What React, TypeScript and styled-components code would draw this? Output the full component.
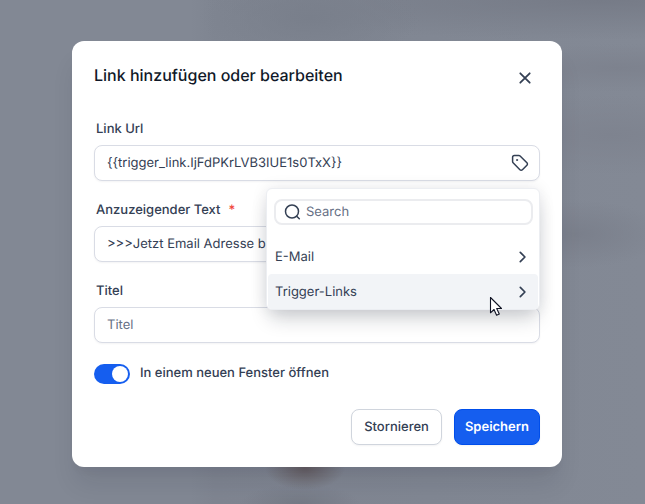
import React, { useState } from "react";
import styled, { createGlobalStyle } from "styled-components";

const colors = {
  ink: "#101828",
  text: "#344054",
  muted: "#667085",
  border: "#d9dce5",
  primary: "#155eef",
  hover: "#f2f4f7",
};

const GlobalStyle = createGlobalStyle`
  *, *::before, *::after { box-sizing: border-box; }
  body {
    margin: 0;
    font-family: Inter, "Liberation Sans", sans-serif;
    color: ${colors.text};
    text-rendering: geometricPrecision;
  }
  button, input { font: inherit; color: inherit; text-rendering: inherit; }
`;

const Backdrop = styled.main`
  min-height: 100vh;
  padding: 41px 83px 37px 72px;
  overflow: hidden;
  background:
    radial-gradient(ellipse 40px 22px at 305px 468px, #665f63 0%, transparent 100%),
    radial-gradient(ellipse 60px 20px at 300px 504px, #747985 0%, transparent 100%),
    radial-gradient(ellipse 90px 34px at 575px 234px, #7a7f8b 0%, transparent 100%),
    radial-gradient(ellipse 160px 40px at 610px 135px, #7e838f 0%, transparent 100%),
    radial-gradient(ellipse 160px 24px at 620px 68px, #7d828e 0%, transparent 100%),
    radial-gradient(ellipse 110px 44px at 310px 18px, #797f8b 0%, transparent 100%),
    radial-gradient(ellipse 400px 40px at 600px 0, #767b87 0%, transparent 100%),
    linear-gradient(to right, #828894 0, #828894 190px, #7f8591 215px, #838995 100%);
`;

const Dialog = styled.form`
  display: flex;
  flex-direction: column;
  padding: 22px;
  background: #fff;
  border-radius: 12px;
  box-shadow: 0 20px 24px -4px rgba(16, 24, 40, 0.1), 0 8px 8px -4px rgba(16, 24, 40, 0.04);
`;

const Header = styled.header`
  display: flex;
  justify-content: space-between;
  align-items: flex-start;
  margin-bottom: 27px;
`;

const Title = styled.h1`
  margin: 0;
  font-size: 16px;
  line-height: 24px;
  font-weight: 500;
  color: ${colors.ink};
`;

const IconButton = styled.button`
  display: grid;
  place-items: center;
  flex: none;
  padding: 0;
  border: 0;
  background: none;
  cursor: pointer;
`;

const CloseButton = styled(IconButton)`
  width: 30px;
  height: 30px;
`;

const Fields = styled.div`
  display: grid;
  gap: 20px;
`;

const Field = styled.div`
  display: grid;
  gap: 7px;
`;

const Label = styled.label`
  padding-left: 2px;
  font-size: 13px;
  line-height: 18px;
  font-weight: 500;
`;

const Required = styled.span`
  margin-left: 8px;
  color: #f04438;
`;

const Control = styled.div`
  position: relative;
  display: flex;
  align-items: center;
  height: 36px;
  padding: 0 10px 0 12px;
  border: 1px solid ${colors.border};
  border-radius: 8px;
  background: #fff;
  box-shadow: 0 1px 2px rgba(16, 24, 40, 0.05);
`;

const TextInput = styled.input`
  flex: 1;
  min-width: 0;
  padding: 0;
  border: 0;
  outline: 0;
  background: none;
  font-size: 13px;
  line-height: 18px;
  &::placeholder { color: ${colors.muted}; opacity: 1; }
`;

const Menu = styled.div`
  position: absolute;
  z-index: 1;
  top: calc(100% + 8px);
  right: -1px;
  width: 274px;
  padding-top: 10px;
  border: 1px solid #eceef2;
  border-radius: 6px;
  background: #fff;
  box-shadow: 0 12px 20px -4px rgba(16, 24, 40, 0.2), 0 0 16px rgba(16, 24, 40, 0.09);
`;

const SearchBox = styled.label`
  display: flex;
  align-items: center;
  gap: 4px;
  height: 26px;
  margin: 0 6px 14px 7px;
  padding: 0 8px;
  border: 2px solid #ebecef;
  border-radius: 8px;
`;

const MenuItem = styled.button<{ $active?: boolean }>`
  display: flex;
  align-items: center;
  justify-content: space-between;
  width: calc(100% - 2px);
  height: 35px;
  margin: 0 1px;
  padding: 0 7px;
  border: 0;
  border-radius: 4px;
  background: ${(p) => (p.$active ? colors.hover : "#fff")};
  font-size: 13px;
  line-height: 18px;
  text-align: left;
  cursor: pointer;
`;

const Pointer = styled.svg`
  position: absolute;
  right: 36px;
  bottom: -8px;
  pointer-events: none;
`;

const SwitchRow = styled.div`
  display: flex;
  align-items: center;
  gap: 10px;
  margin: 21px 0 25px;
`;

const SwitchLabel = styled.label`
  padding-bottom: 2px;
  font-size: 13px;
  line-height: 18px;
  font-weight: 500;
`;

const Switch = styled.input`
  appearance: none;
  flex: none;
  display: flex;
  width: 36px;
  height: 20px;
  margin: 0;
  padding: 2px;
  border-radius: 10px;
  background: #d0d5dd;
  cursor: pointer;
  &::before {
    content: "";
    width: 16px;
    height: 16px;
    border-radius: 50%;
    background: #fff;
  }
  &:checked { justify-content: flex-end; background: ${colors.primary}; }
`;

const Actions = styled.footer`
  display: flex;
  justify-content: flex-end;
  gap: 12px;
`;

const Button = styled.button<{ $primary?: boolean }>`
  height: 36px;
  padding: 0 ${(p) => (p.$primary ? 10 : 12)}px;
  border: 1px solid ${(p) => (p.$primary ? "#004eeb" : "#d0d5dd")};
  border-radius: 8px;
  background: ${(p) => (p.$primary ? colors.primary : "#fff")};
  color: ${(p) => (p.$primary ? "#fff" : colors.text)};
  font-size: 13px;
  line-height: 18px;
  font-weight: ${(p) => (p.$primary ? 600 : 500)};
  box-shadow: 0 1px 2px rgba(16, 24, 40, 0.05);
  cursor: pointer;
`;

const stroke = {
  fill: "none",
  stroke: "currentColor",
  strokeLinecap: "round" as const,
  strokeLinejoin: "round" as const,
  "aria-hidden": true,
};

const CloseIcon = () => (
  <svg width="12" height="12" viewBox="0 0 12 12" {...stroke} strokeWidth="1.8">
    <path d="M1.3 1.3l9.4 9.4M10.7 1.3L1.3 10.7" />
  </svg>
);

const TagIcon = () => (
  <svg width="18" height="18" viewBox="0 0 18 18" {...stroke} strokeWidth="1.5">
    <path d="M1.6 3.3v4.2c0 .5.2 1 .5 1.3l6.8 6.9c.7.7 1.8.7 2.5 0l4.5-4.4c.7-.7.7-1.8 0-2.5L9.1 2c-.4-.4-.8-.5-1.3-.5H3.4c-1 0-1.8.8-1.8 1.8z" />
    <circle cx="6" cy="6" r=".6" fill="currentColor" strokeWidth="0.8" />
  </svg>
);

const SearchIcon = () => (
  <svg width="18" height="18" viewBox="0 0 18 18" {...stroke} strokeWidth="1.5">
    <circle cx="8" cy="8.5" r="6.5" />
    <path d="M12.7 13.2l2.6 2.6" />
  </svg>
);

const ChevronIcon = () => (
  <svg width="18" height="18" viewBox="0 0 18 18" {...stroke} strokeWidth="1.7">
    <path d="M7.3 4.4L11.9 9l-4.6 4.6" />
  </svg>
);

export default function App() {
  const [url, setUrl] = useState("{{trigger_link.IjFdPKrLVB3IUE1s0TxX}}");
  const [text, setText] = useState(">>>Jetzt Email Adresse b");
  const [title, setTitle] = useState("");
  const [newWindow, setNewWindow] = useState(true);

  return (
    <>
      <GlobalStyle />
      <Backdrop>
        <Dialog role="dialog" aria-labelledby="dialog-title" onSubmit={(e) => e.preventDefault()}>
          <Header>
            <Title id="dialog-title">Link hinzufügen oder bearbeiten</Title>
            <CloseButton type="button" aria-label="Schließen">
              <CloseIcon />
            </CloseButton>
          </Header>
          <Fields>
            <Field>
              <Label htmlFor="url">Link Url</Label>
              <Control>
                <TextInput id="url" value={url} onChange={(e) => setUrl(e.target.value)} />
                <IconButton type="button" aria-label="Variable einfügen">
                  <TagIcon />
                </IconButton>
                <Menu>
                  <SearchBox>
                    <SearchIcon />
                    <TextInput type="text" aria-label="Search" placeholder="Search" />
                  </SearchBox>
                  <MenuItem type="button">
                    E-Mail
                    <ChevronIcon />
                  </MenuItem>
                  <MenuItem type="button" $active>
                    Trigger-Links
                    <ChevronIcon />
                  </MenuItem>
                  <Pointer width="14" height="21" viewBox="0 0 14 21" aria-hidden="true">
                    <path
                      d="M1.5 1.5v15.3l3.5-3.3 2.6 5.8 2.7-1.2-2.6-5.6h4.8z"
                      fill="#fff"
                      stroke="#101323"
                      strokeWidth="1.1"
                      strokeLinejoin="round"
                    />
                  </Pointer>
                </Menu>
              </Control>
            </Field>
            <Field>
              <Label htmlFor="text">
                Anzuzeigender Text<Required>*</Required>
              </Label>
              <Control>
                <TextInput id="text" required value={text} onChange={(e) => setText(e.target.value)} />
              </Control>
            </Field>
            <Field>
              <Label htmlFor="title">Titel</Label>
              <Control>
                <TextInput
                  id="title"
                  placeholder="Titel"
                  value={title}
                  onChange={(e) => setTitle(e.target.value)}
                />
              </Control>
            </Field>
          </Fields>
          <SwitchRow>
            <Switch
              id="new-window"
              type="checkbox"
              role="switch"
              checked={newWindow}
              onChange={(e) => setNewWindow(e.target.checked)}
            />
            <SwitchLabel htmlFor="new-window">In einem neuen Fenster öffnen</SwitchLabel>
          </SwitchRow>
          <Actions>
            <Button type="button">Stornieren</Button>
            <Button type="submit" $primary>
              Speichern
            </Button>
          </Actions>
        </Dialog>
      </Backdrop>
    </>
  );
}
